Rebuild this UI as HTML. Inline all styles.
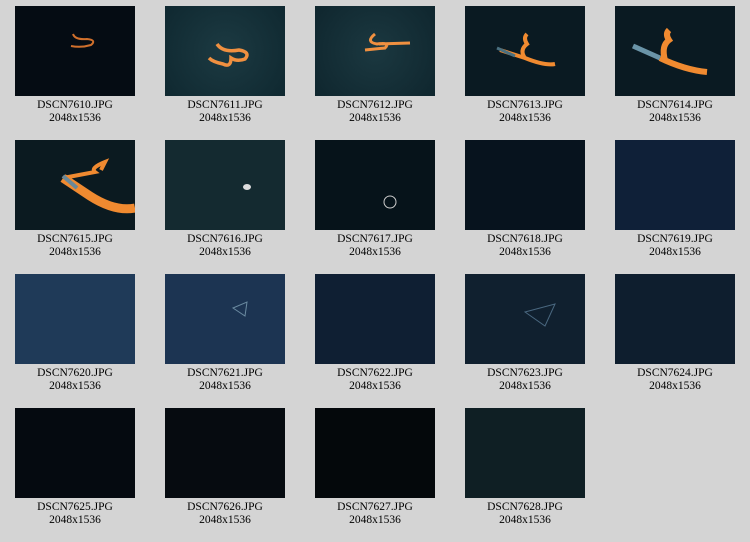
<!DOCTYPE html>
<html><head><style>
body{margin:0;width:750px;height:542px;background:#d4d4d4;position:relative;overflow:hidden;font-family:"Liberation Serif",serif;}
.c{position:absolute;width:150px;text-align:center;font-size:11.5px;line-height:13px;color:#000;}
.t{display:block;width:120px;height:90px;margin:0 auto 3px;position:relative;overflow:hidden}
.t svg{position:absolute;left:0;top:0}
</style></head><body>

<div class="c" style="left:0;top:6px"><div class="t" style="background:#050c13"><svg width="120" height="90"><path d="M58 28 Q60 34 72 33 Q82 34 76 39 Q66 42 56 40" stroke="#d0702c" stroke-width="2" fill="none"/></svg></div>DSCN7610.JPG<br>2048x1536</div>
<div class="c" style="left:150px;top:6px"><div class="t" style="background:radial-gradient(circle at 50% 50%,#1c3a42,#0f2830)"><svg width="120" height="90"><path d="M52 38 Q58 47 74 44 Q86 46 80 53 Q72 56 66 52 Q66 62 58 58 Q48 56 44 52" stroke="#f09040" stroke-width="3.5" fill="none"/></svg></div>DSCN7611.JPG<br>2048x1536</div>
<div class="c" style="left:300px;top:6px"><div class="t" style="background:radial-gradient(circle at 50% 50%,#1b3840,#0f262e)"><svg width="120" height="90"><path d="M60 28 Q50 36 62 38 Q76 36 70 42 L50 44 M64 38 L95 37" stroke="#f09040" stroke-width="3" fill="none"/></svg></div>DSCN7612.JPG<br>2048x1536</div>
<div class="c" style="left:450px;top:6px"><div class="t" style="background:#0a1a22"><svg width="120" height="90"><path d="M35 44 L60 52 Q80 60 90 58 M60 52 Q54 44 62 38 Q58 32 62 28" stroke="#f08a30" stroke-width="4" fill="none"/><path d="M32 42 L50 50" stroke="#4a7080" stroke-width="3"/></svg></div>DSCN7613.JPG<br>2048x1536</div>
<div class="c" style="left:600px;top:6px"><div class="t" style="background:#0a1a22"><svg width="120" height="90"><path d="M18 40 L45 52" stroke="#6a94a8" stroke-width="5"/><path d="M45 52 Q70 64 92 66 M50 54 Q46 40 54 34 Q50 28 54 24" stroke="#f08a30" stroke-width="6" fill="none"/></svg></div>DSCN7614.JPG<br>2048x1536</div>

<div class="c" style="left:0;top:140px"><div class="t" style="background:#0b1a20"><svg width="120" height="90"><path d="M48 38 L75 56 Q100 72 120 68" stroke="#f08a30" stroke-width="9" fill="none"/><path d="M48 38 L80 32 Q75 28 90 22 L86 30" stroke="#f08a30" stroke-width="4" fill="none"/><path d="M48 36 L62 48" stroke="#6a8898" stroke-width="4"/></svg></div>DSCN7615.JPG<br>2048x1536</div>
<div class="c" style="left:150px;top:140px"><div class="t" style="background:#142a30"><svg width="120" height="90"><ellipse cx="82" cy="47" rx="4" ry="3" fill="#ddd"/></svg></div>DSCN7616.JPG<br>2048x1536</div>
<div class="c" style="left:300px;top:140px"><div class="t" style="background:#06131a"><svg width="120" height="90"><circle cx="75" cy="62" r="6" stroke="#ccc" stroke-width="1" fill="none"/></svg></div>DSCN7617.JPG<br>2048x1536</div>
<div class="c" style="left:450px;top:140px"><div class="t" style="background:#07131e"></div>DSCN7618.JPG<br>2048x1536</div>
<div class="c" style="left:600px;top:140px"><div class="t" style="background:#0f2038"></div>DSCN7619.JPG<br>2048x1536</div>

<div class="c" style="left:0;top:274px"><div class="t" style="background:#1f3a58"></div>DSCN7620.JPG<br>2048x1536</div>
<div class="c" style="left:150px;top:274px"><div class="t" style="background:#1c3452"><svg width="120" height="90"><path d="M68 34 L82 28 L80 42 Z" stroke="#6a8aa0" fill="none"/></svg></div>DSCN7621.JPG<br>2048x1536</div>
<div class="c" style="left:300px;top:274px"><div class="t" style="background:#0f1f33"></div>DSCN7622.JPG<br>2048x1536</div>
<div class="c" style="left:450px;top:274px"><div class="t" style="background:#10202f"><svg width="120" height="90"><path d="M60 38 L90 30 L80 52 Z" stroke="#4a6880" fill="none"/></svg></div>DSCN7623.JPG<br>2048x1536</div>
<div class="c" style="left:600px;top:274px"><div class="t" style="background:#0e1e2e"></div>DSCN7624.JPG<br>2048x1536</div>

<div class="c" style="left:0;top:408px"><div class="t" style="background:#050a10"></div>DSCN7625.JPG<br>2048x1536</div>
<div class="c" style="left:150px;top:408px"><div class="t" style="background:#060b10"></div>DSCN7626.JPG<br>2048x1536</div>
<div class="c" style="left:300px;top:408px"><div class="t" style="background:#04080b"></div>DSCN7627.JPG<br>2048x1536</div>
<div class="c" style="left:450px;top:408px"><div class="t" style="background:#0f1f24"></div>DSCN7628.JPG<br>2048x1536</div>
</body></html>
